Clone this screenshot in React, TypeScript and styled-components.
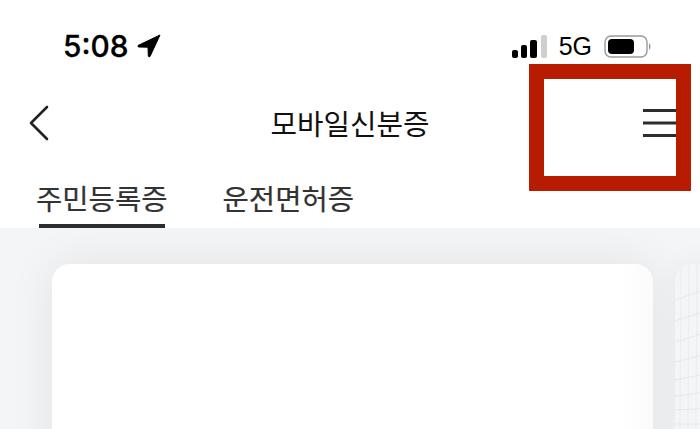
import styled, { createGlobalStyle } from "styled-components";

const GlobalStyle = createGlobalStyle`
  html, body {
    margin: 0;
    padding: 0;
    background: #fff;
  }
`

const Screen = styled.div`
  position: relative;
  width: 700px;
  height: 429px;
  overflow: hidden;
  display: flex;
  flex-direction: column;
  background: #fff;
  font-family: "Noto Sans CJK KR", "Noto Sans", sans-serif;
`

const StatusBar = styled.div`
  height: 64px;
  flex-shrink: 0;
  box-sizing: border-box;
  padding: 27px 48px 0 63px;
  display: flex;
  justify-content: space-between;
  align-items: flex-start;
`

const TimeGroup = styled.div`
  display: flex;
  align-items: center;
  gap: 9px;
  height: 38px;
`

const Time = styled.span`
  font-family: Inter, "Liberation Sans", sans-serif;
  font-size: 29.8px;
  font-weight: 500;
  line-height: 38px;
  color: #000;
  -webkit-text-stroke: 0.3px #000;
`

const StatusRight = styled.div`
  display: flex;
  align-items: center;
  gap: 12px;
  height: 38px;
`

const Network = styled.span`
  font-family: "Liberation Sans", sans-serif;
  font-size: 25px;
  line-height: 38px;
  color: #000;
`

const NavBar = styled.div`
  height: 118px;
  flex-shrink: 0;
  box-sizing: border-box;
  padding: 0 24px 0 28px;
  display: flex;
  justify-content: space-between;
  align-items: center;
`

const NavTitle = styled.h1`
  margin: 0 0 0 7px;
  font-size: 28.8px;
  font-weight: 400;
  line-height: 40px;
  color: #111;
`

const Tabs = styled.div`
  height: 46px;
  flex-shrink: 0;
  box-sizing: border-box;
  padding-left: 36px;
  display: flex;
  gap: 55px;
`

const Tab = styled.div<{ $active?: boolean }>`
  position: relative;
  height: 46px;
  font-size: 28.6px;
  line-height: 32px;
  color: #333;
  -webkit-text-stroke: 0.2px #333;

  &::after {
    content: "";
    display: ${(p) => (p.$active ? "block" : "none")};
    position: absolute;
    left: 3px;
    right: 3px;
    bottom: 0;
    height: 4px;
    background: #2d2d2d;
  }
`

const Content = styled.div`
  flex: 1;
  display: flex;
  gap: 22px;
  padding: 36px 0 0 52px;
  background: #f4f5f6;
  overflow: hidden;
`

const Card = styled.div`
  width: 601px;
  flex-shrink: 0;
  height: 300px;
  background: linear-gradient(to right, #fff 95%, #fbfbfb);
  border-radius: 18px 18px 0 0;
  box-shadow: 0 0 48px rgba(0, 0, 0, 0.08);
`

const NextCard = styled.div`
  width: 300px;
  flex-shrink: 0;
  height: 300px;
  border-radius: 18px 0 0 0;
  overflow: hidden;
  background: #f4f5f6;
  box-shadow: 0 0 30px rgba(0, 0, 0, 0.05);
`

const Annotation = styled.div`
  position: absolute;
  left: 529px;
  top: 64px;
  width: 162px;
  height: 127px;
  box-sizing: border-box;
  border: 15px solid #b81c00;
`

const MenuIcon = () => (
  <svg width="33" height="28" viewBox="0 0 33 28" style={{ display: "block" }}>
    <path d="M0 1.5h33M0 14h33M0 26.5h33" stroke="#2d2d2d" strokeWidth="3" />
  </svg>
)

const BackIcon = () => (
  <svg width="22" height="36" viewBox="0 0 22 36" style={{ display: "block" }}>
    <path d="M19 2 L3 18 L19 34" fill="none" stroke="#222" strokeWidth="2.6" strokeLinecap="round" strokeLinejoin="round" />
  </svg>
)

const LocationIcon = () => (
  <svg width="24" height="24" viewBox="0 0 24 24" style={{ display: "block" }}>
    <path d="M23 1 L1 11.5 Q0.5 13 2 13 L11 13.2 L11.3 22 Q12 23.5 13 22.5 Z" fill="#000" stroke="#000" strokeWidth="1" strokeLinejoin="round" />
  </svg>
)

const SignalIcon = () => (
  <svg width="35" height="23" viewBox="0 0 35 23" style={{ display: "block" }}>
    <rect x="0" y="15" width="6" height="8" rx="2" fill="#000" />
    <rect x="9" y="10" width="6" height="13" rx="2" fill="#000" />
    <rect x="18" y="5" width="7" height="18" rx="2" fill="#000" />
    <rect x="29" y="0" width="6" height="23" rx="2" fill="#cfcfcf" />
  </svg>
)

const BatteryIcon = () => (
  <svg width="48" height="23" viewBox="0 0 48 23" style={{ display: "block" }}>
    <rect x="1" y="1" width="42" height="21" rx="6" fill="none" stroke="#9a9a9a" strokeWidth="1.4" />
    <rect x="4" y="4" width="26" height="15" rx="4" fill="#000" />
    <path d="M45 8 Q48 11.5 45 15 Z" fill="#8c8c8c" />
  </svg>
)

const GridPattern = () => (
  <svg width="300" height="300" viewBox="0 0 300 300" style={{ display: "block" }}>
    <g stroke="#e6e7e9" strokeWidth="1" fill="none">
      <path d="M0 36 L40 22M0 57 L40 44M0 78 L40 66M0 98 L40 88M0 116 L40 108M0 132 L40 127M0 146 L40 144M0 160 L40 160M0 172 L40 175M0 184 L40 188" />
      <path d="M6 0 L5 165M14 0 L13 165M22 0 L21 165M30 0 L29 165" opacity="0.6" />
    </g>
  </svg>
)

const App = () => {
    return (
        <Screen>
            <GlobalStyle />
            <StatusBar>
                <TimeGroup>
                    <Time>5:08</Time>
                    <LocationIcon />
                </TimeGroup>
                <StatusRight>
                    <SignalIcon />
                    <Network>5G</Network>
                    <BatteryIcon />
                </StatusRight>
            </StatusBar>
            <NavBar>
                <BackIcon />
                <NavTitle>모바일신분증</NavTitle>
                <MenuIcon />
            </NavBar>
            <Tabs>
                <Tab $active>주민등록증</Tab>
                <Tab>운전면허증</Tab>
            </Tabs>
            <Content>
                <Card />
                <NextCard>
                    <GridPattern />
                </NextCard>
            </Content>
            <Annotation />
        </Screen>
    )
}

export default App;
